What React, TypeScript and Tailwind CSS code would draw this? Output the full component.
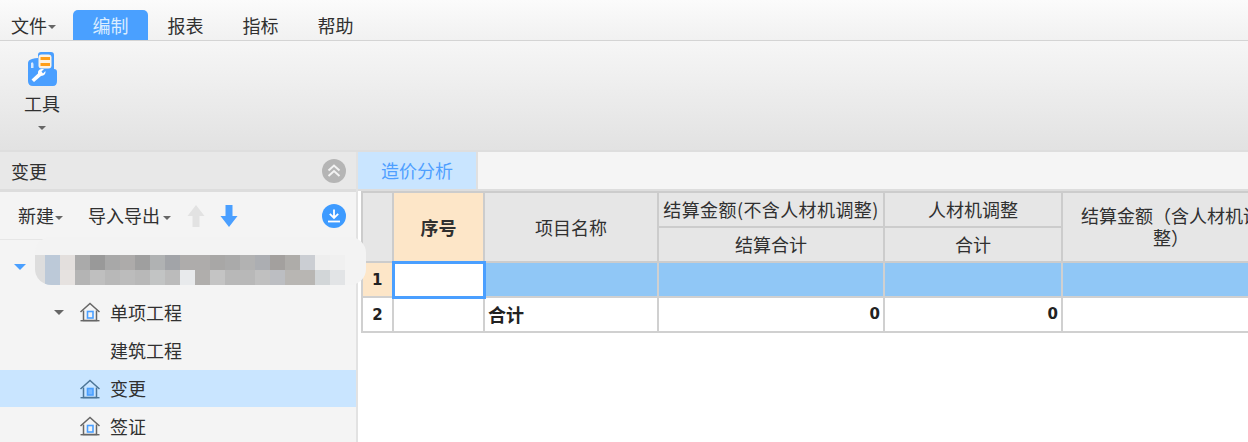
const row1 = ["#dddddd","#bcc9d8","#e3dfdd","#aaaaaa","#999999","#a8a8a8","#adabaa","#9f9f9f","#b0b2b3","#a2a4a8","#aeacab","#aeacab","#a8a7a6","#aaaaaa","#b2b2b2","#acaeb2","#a3a09e","#aeaca9","#cbced3","#eeeeee","#f0f0f0"];
const row2 = ["#dddddd","#bcc9d8","#e6e2e0","#b4b4b4","#bfbfbf","#b8b8b8","#bcbcbc","#b8b8b8","#c2c4c4","#bbbbbb","#e8eaec","#b0aeac","#c4c4c4","#b8b8b8","#b8b8b8","#c0c0c0","#bcbec2","#b8b6b3","#b8b6b3","#d2d6d8","#e2e4e6"];

function Caret({ className = "" }: { className?: string }) {
  return <span className={"inline-block w-0 h-0 border-x-[4px] border-x-transparent border-t-[4px] border-t-[#666666] " + className} />;
}

function House({ active = false }: { active?: boolean }) {
  const stroke = active ? "#4d7596" : "#666666";
  return (
    <svg width="22" height="20" viewBox="0 0 22 20" fill="none" className="shrink-0">
      <path d="M1.5 10 L11 1.5 L20.5 10" stroke={stroke} strokeWidth="1.5" />
      <path d="M4.5 8.5 V18.5 H17.5 V8.5" stroke={stroke} strokeWidth="1.5" />
      <path d="M1.5 18.7 H20.5" stroke={stroke} strokeWidth="1.4" />
      <rect x="8.5" y="9.5" width="5.5" height="6.5" stroke="#4a9fff" strokeWidth="1.6" fill={active ? "#78b8ff" : "none"} />
    </svg>
  );
}

function ToolIcon() {
  return (
    <svg width="32" height="36" viewBox="0 0 32 36" className="shrink-0">
      <path d="M6 8 Q9 7 12 7 V4 Q12 1 15 1 H25 Q28 1 28 4 V18 Q31 18 31 21 V30 Q31 35 27 35 H7 Q2 35 2 30 V12 Q2 9 6 8 Z" fill="#4a9fff" />
      <rect x="12.5" y="3.5" width="13" height="14" rx="3" fill="#fdf3e4" />
      <rect x="14.5" y="6" width="9.5" height="3" fill="#ff9f1a" />
      <rect x="14.5" y="12" width="9.5" height="3" fill="#ff9f1a" />
      <path d="M5 12 Q7 10 7.5 13 V17 H5 Z" fill="#d6e9ff" />
      <path d="M8 31 L5.5 28.5 L12 22.5 Q11.5 18.5 15.5 18 L18 18 L15.5 20.5 L17 22.5 L19.5 20 Q20 24.5 15 25 Z" fill="#ffffff" />
    </svg>
  );
}

function Arrow({ color, up = false }: { color: string; up?: boolean }) {
  return (
    <svg width="18" height="24" viewBox="0 0 18 24">
      <path d={up ? "M9 1 L0.5 12 H5.5 V23 H12.5 V12 H17.5 Z" : "M9 23 L0.5 12 H5.5 V1 H12.5 V12 H17.5 Z"} fill={color} />
    </svg>
  );
}

const H = "border-2 border-[#cccccc] bg-[#e6e6e6] text-center align-middle font-normal p-0 leading-[22px]";
const D = "border-2 border-[#d0d0d0] p-0 h-[35px]";
const NUM = " font-['DejaVu_Sans',sans-serif] font-bold text-[15px] text-[#222222]";

export default function App() {
  return (
    <div className="w-[1248px] h-[442px] overflow-hidden flex flex-col bg-white text-[18px] text-[#303030] font-['Noto_Sans_CJK_SC','Noto_Sans',sans-serif]">
      <div className="h-[41px] shrink-0 flex items-end border-b border-[#d4d4d4] bg-gradient-to-b from-[#fbfbfb] to-[#f1f1f1]">
        <div className="w-[73px] h-[30px] pl-[11px] flex items-center">
          文件<Caret className="ml-px mt-1" />
        </div>
        <div className="w-[75px] h-[30px] flex items-center justify-center rounded-t-[5px] bg-[#4aa0ff] text-[#dcedff]">编制</div>
        <div className="w-[75px] h-[30px] flex items-center justify-center">报表</div>
        <div className="w-[75px] h-[30px] flex items-center justify-center">指标</div>
        <div className="w-[75px] h-[30px] flex items-center justify-center">帮助</div>
      </div>

      <div className="h-[109px] shrink-0 bg-gradient-to-b from-[#f6f6f6] to-[#e2e2e2] pt-[10px] pl-[24px]">
        <div className="w-[36px] flex flex-col items-center">
          <ToolIcon />
          <span className="leading-[24px] mt-[4px]">工具</span>
          <Caret className="mt-[11px]" />
        </div>
      </div>

      <div className="flex-1 min-h-0 flex border-t-2 border-[#dedede]">
        <div className="w-[358px] shrink-0 border-r-2 border-[#e2e2e2] bg-[#f4f4f4] flex flex-col">
          <div className="h-[40px] shrink-0 bg-[#e8e8e8] border-b-[3px] border-[#dddddd] flex items-center justify-between pl-[11px] pr-[10px] pt-px">
            <span>变更</span>
            <span className="w-6 h-6 rounded-full bg-[#b5b5b5] flex items-center justify-center">
              <svg width="16" height="16" viewBox="0 0 16 16" fill="none" stroke="#f3f3f3" strokeWidth="2">
                <path d="M2.5 7.5 L8 2.5 L13.5 7.5" />
                <path d="M2.5 13 L8 8 L13.5 13" />
              </svg>
            </span>
          </div>

          <div className="h-[48px] shrink-0 border-b border-[#e6e6e6] flex items-center pl-[18px] pr-[10px]">
            <span>新建</span><Caret className="ml-px mt-1" />
            <span className="ml-[25px]">导入导出</span><Caret className="ml-[3px] mt-1" />
            <span className="ml-[16px] flex"><Arrow color="#e2e2e2" up /></span>
            <span className="ml-[15px] flex"><Arrow color="#4a9fff" /></span>
            <span className="ml-auto w-6 h-6 rounded-full bg-[#3e9bff] flex items-center justify-center">
              <svg width="16" height="16" viewBox="0 0 16 16" fill="none" stroke="#ffffff" strokeWidth="1.8">
                <path d="M8 1.5 V9.5 M3.8 5.8 L8 10 L12.2 5.8" />
                <path d="M2 13.5 H14" />
              </svg>
            </span>
          </div>

          <div className="relative h-[53px] shrink-0">
            <span className="absolute left-[14px] top-[24px] w-0 h-0 border-x-[6px] border-x-transparent border-t-[6px] border-t-[#4a9fff]" />
            <div className="absolute left-[35px] top-[-3px] w-[331px] h-[48px] rounded-[16px] bg-[#f3f3f3] z-10 flex flex-col justify-end overflow-hidden">
              {[row1, row2].map((r, i) => (
                <div key={i} className="flex h-[15px]">
                  {r.map((c, j) => (
                    <div key={j} style={{ background: c }} className={j === 0 ? "w-[10px]" : "w-[15px]"} />
                  ))}
                </div>
              ))}
            </div>
          </div>

          <div className="h-[38px] shrink-0 flex items-center pl-[54px]">
            <Caret className="border-x-[5px] border-t-[5px] mr-[15px]" />
            <House />
            <span className="ml-[9px]">单项工程</span>
          </div>
          <div className="h-[39px] shrink-0 flex items-center pl-[110px]">建筑工程</div>
          <div className="h-[37px] shrink-0 flex items-center pl-[79px] bg-[#c9e5ff]">
            <House active />
            <span className="ml-[9px]">变更</span>
          </div>
          <div className="h-[38px] shrink-0 flex items-center pl-[79px]">
            <House />
            <span className="ml-[9px]">签证</span>
          </div>
        </div>

        <div className="flex-1 min-w-0 overflow-hidden flex flex-col bg-white">
          <div className="h-[39px] shrink-0 flex bg-[#f5f5f5] border-b-2 border-[#dddddd]">
            <div className="w-[118px] border-r-2 border-[#e0e0e0] box-content bg-[#c9e5ff] text-[#4f9fff] flex items-center justify-center">造价分析</div>
          </div>
          <div className="pl-[3px]">
            <table className="table-fixed border-collapse w-[918px]">
              <colgroup>
                <col className="w-[31px]" />
                <col className="w-[91px]" />
                <col className="w-[174px]" />
                <col className="w-[226px]" />
                <col className="w-[178px]" />
                <col className="w-[218px]" />
              </colgroup>
              <thead>
                <tr className="h-[35px]">
                  <th rowSpan={2} className={H}></th>
                  <th rowSpan={2} className={H + " !bg-[#fde6c8] !font-bold"}>序号</th>
                  <th rowSpan={2} className={H}>项目名称</th>
                  <th className={H + " whitespace-nowrap tracking-[0.4px] !pb-[2px]"}>结算金额(不含人材机调整)</th>
                  <th className={H + " !pb-[2px]"}>人材机调整</th>
                  <th rowSpan={2} className={H + " !pb-[2px] !px-[18px]"}>结算金额（含人材机调整）</th>
                </tr>
                <tr className="h-[35px]">
                  <th className={H + " !pb-[2px]"}>结算合计</th>
                  <th className={H + " !pb-[2px]"}>合计</th>
                </tr>
              </thead>
              <tbody>
                <tr className="h-[35px] bg-[#90c7f6]">
                  <td className={D + " !bg-[#fde6c8] text-center !pt-[2px]" + NUM}>1</td>
                  <td className="p-0 h-[35px] bg-white border-[3px] border-[#4a9fff]"></td>
                  <td className={D}></td>
                  <td className={D}></td>
                  <td className={D}></td>
                  <td className={D}></td>
                </tr>
                <tr className="h-[35px] bg-white">
                  <td className={D + " text-center !pt-[2px]" + NUM}>2</td>
                  <td className={D}></td>
                  <td className={D + " !pl-[3px] font-bold text-[#222222]"}>合计</td>
                  <td className={D + " !pr-[3px] text-right" + NUM}>0</td>
                  <td className={D + " !pr-[3px] text-right" + NUM}>0</td>
                  <td className={D}></td>
                </tr>
              </tbody>
            </table>
          </div>
        </div>
      </div>
    </div>
  );
}
